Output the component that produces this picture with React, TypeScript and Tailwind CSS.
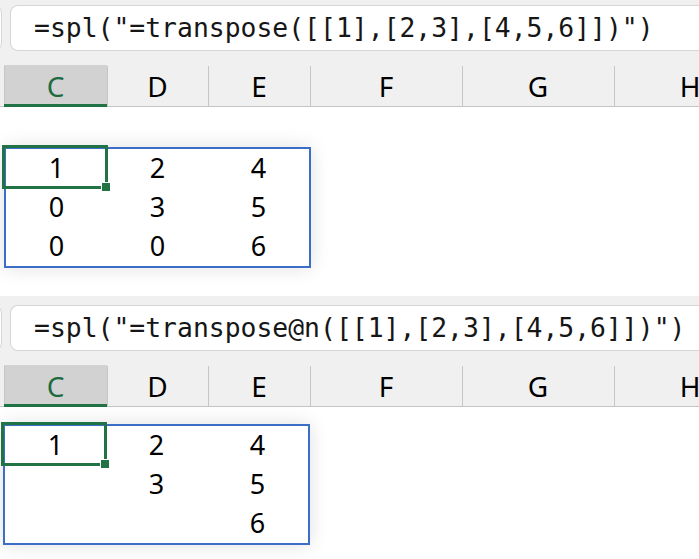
const mono = "font-['DejaVu_Sans_Mono','Liberation_Mono',monospace]";
const sans = "font-['Noto_Sans','Open_Sans',sans-serif]";

const columns = [
	{ label: "C", width: "w-[103px]" },
	{ label: "D", width: "w-[101px]" },
	{ label: "E", width: "w-[102px]" },
	{ label: "F", width: "w-[152px]" },
	{ label: "G", width: "w-[152px]" },
	{ label: "H", width: "w-[152px]" },
];

function FormulaBar({ formula }: { formula: string }) {
	return (
		<div className="flex h-[46px] gap-2">
			<div className="-ml-[40px] w-[42px] shrink-0 rounded-lg border border-[#d6d6d6] bg-white" />
			<div
				className={`flex flex-1 items-center rounded-l-lg border border-r-0 border-[#d6d6d6] bg-white pl-[23px] text-[26.4px] whitespace-nowrap text-[#161616] ${mono}`}
			>
				{formula}
			</div>
		</div>
	);
}

function ColumnHeaders() {
	return (
		<div className={`flex h-[42px] border-b border-[#c4c4c4] ${sans}`}>
			<div className="w-[4px] shrink-0" />
			{columns.map((col, i) => (
				<div
					key={col.label}
					className={`relative flex shrink-0 items-center justify-center text-[28px] ${col.width} ${
						i === 0 ? "bg-[#d2d2d2] text-[#1e6b3f]" : "text-black"
					}`}
				>
					<span className="pt-[1px]">{col.label}</span>
					<div className="absolute top-[1px] bottom-0 left-0 w-px bg-[#c6c6c6]" />
					{i === 0 && <div className="absolute right-0 -bottom-px left-0 h-[3px] bg-[#217346]" />}
				</div>
			))}
		</div>
	);
}

function SpillTable({ rows }: { rows: (number | null)[][] }) {
	return (
		<div className="relative w-[307px] border-2 border-[#3d6ec7] bg-white shadow-[0_0_18px_rgba(0,0,0,0.13)]">
			<div className={`grid grid-cols-[101px_101px_101px] text-[27px] text-black ${sans}`}>
				{rows.flat().map((v, i) => (
					<div key={i} className="flex h-[39px] items-center justify-center">
						{v ?? ""}
					</div>
				))}
			</div>
			{/* active cell + fill handle */}
			<div className="absolute -top-[4px] -left-[4px] h-[44px] w-[106px] border-[3px] border-[#217346]" />
			<div className="absolute top-[33px] left-[95px] h-[10px] w-[10px] border border-white bg-[#217346]" />
		</div>
	);
}

function Panel({
	formula,
	rows,
	topPad,
	gap,
	tableLeft,
	height,
}: {
	formula: string;
	rows: (number | null)[][];
	topPad: string;
	gap: string;
	tableLeft: string;
	height: string;
}) {
	return (
		<section className={`flex flex-col overflow-hidden ${height}`}>
			<div className={`flex flex-col gap-[14px] bg-[#f0f0f0] ${topPad}`}>
				<FormulaBar formula={formula} />
				<ColumnHeaders />
			</div>
			<div className={`${gap} ${tableLeft}`}>
				<SpillTable rows={rows} />
			</div>
		</section>
	);
}

export default function App() {
	return (
		<main className="h-[559px] w-[699px] overflow-hidden bg-white">
			<Panel
				formula={'=spl("=transpose([[1],[2,3],[4,5,6]])")'}
				rows={[
					[1, 2, 4],
					[0, 3, 5],
					[0, 0, 6],
				]}
				topPad="pt-[5px]"
				gap="pt-[40px]"
				tableLeft="pl-[4px]"
				height="h-[296px]"
			/>
			<Panel
				formula={'=spl("=transpose@n([[1],[2,3],[4,5,6]])")'}
				rows={[
					[1, 2, 4],
					[null, 3, 5],
					[null, null, 6],
				]}
				topPad="pt-[9px]"
				gap="pt-[17px]"
				tableLeft="pl-[3px]"
				height="h-[263px]"
			/>
		</main>
	);
}
